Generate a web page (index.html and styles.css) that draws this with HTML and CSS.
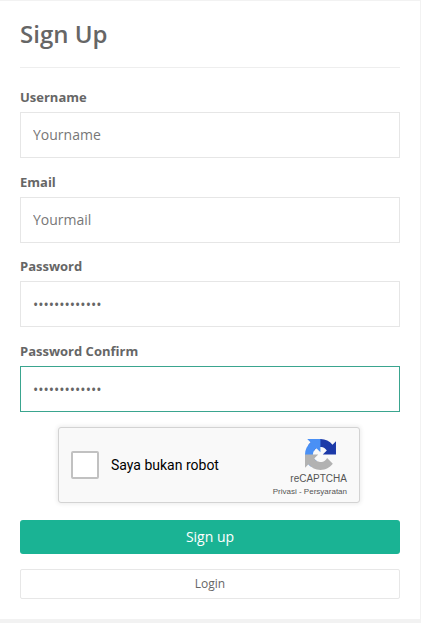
FILE: index.html
```html
<!DOCTYPE html>
<html lang="id">
<head>
  <meta charset="UTF-8" />
  <meta name="viewport" content="width=device-width, initial-scale=1.0" />
  <title>Sign Up</title>
  <link rel="stylesheet" href="styles.css">
</head>
<body>
  <!-- signup card -->
  <div class="card">
    <h1 class="card-title">Sign Up</h1>

    <form class="signup-form">
      <div class="form-group">
        <label for="username">Username</label>
        <input id="username" type="text" placeholder="Yourname">
      </div>
      <div class="form-group">
        <label for="email">Email</label>
        <input id="email" type="text" placeholder="Yourmail">
      </div>
      <div class="form-group">
        <label for="password">Password</label>
        <input id="password" class="is-secret" type="password" value="secretpasswor">
      </div>
      <div class="form-group">
        <label for="confirm">Password Confirm</label>
        <input id="confirm" class="is-secret is-focus" type="password" value="secretpasswor">
      </div>

      <!-- captcha box -->
      <div class="captcha">
        <span class="captcha-check"></span>
        <span class="captcha-text">Saya bukan robot</span>
        <div class="captcha-brand">
          <svg class="captcha-logo" viewBox="0 0 64 64" width="31" height="31">
            <path fill="#1c3aa9" d="M64 31.955l-.033-1.37V4.687l-7.16 7.16C50.948 4.674 42.033.093 32.05.093c-10.4 0-19.622 4.96-25.458 12.64l11.736 11.86a15.55 15.55 0 0 1 4.754-5.334c2.05-1.6 4.952-2.906 8.968-2.906.485 0 .86.057 1.135.163 4.976.393 9.288 3.14 11.827 7.124l-8.307 8.307L64 31.953"/>
            <path fill="#4a90f5" d="M31.862 0l-1.37.033H4.594l7.16 7.16C4.58 13.052 0 21.967 0 31.95c0 10.4 4.96 19.622 12.64 25.458l11.86-11.736a15.55 15.55 0 0 1-5.334-4.754c-1.6-2.05-2.906-4.952-2.906-8.968 0-.485.057-.86.163-1.135.393-4.976 3.14-9.288 7.124-11.827l8.307 8.307L31.86 0"/>
            <path fill="#b2b2b2" d="M.001 31.955l.033 1.37v25.9l7.16-7.16c5.86 7.173 14.774 11.754 24.76 11.754 10.4 0 19.622-4.96 25.458-12.64l-11.736-11.86a15.55 15.55 0 0 1-4.754 5.334c-2.05 1.6-4.952 2.906-8.968 2.906-.485 0-.86-.057-1.135-.163-4.976-.393-9.288-3.14-11.827-7.124l8.307-8.307L.001 31.953"/>
          </svg>
          <div class="captcha-name">reCAPTCHA</div>
          <div class="captcha-links">Privasi - Persyaratan</div>
        </div>
      </div>

      <button class="btn-signup" type="button">Sign up</button>
      <button class="btn-login" type="button">Login</button>
    </form>
  </div>
</body>
</html>
```

FILE: styles.css
```css
* {
  box-sizing: border-box;
}

html, body {
  margin: 0;
  padding: 0;
  height: 100%;
  overflow: hidden;
  background-color: #f2f2f2;
  font-family: "Open Sans", sans-serif;
  color: #666;
}

body {
  padding: 1px 1px 0 0;
}

.card {
  background-color: #fff;
  height: 618px;
  padding: 0 20px;
}

.card-title {
  margin: 0;
  height: 67px;
  padding-top: 15px;
  border-bottom: 1px solid #eee;
  font-size: 24px;
  line-height: 36px;
  font-weight: 600;
  color: #666;
}

/* form rows */
.signup-form {
  padding-top: 20px;
}

.form-group {
  height: 84.67px;
}

.form-group label {
  display: block;
  height: 24px;
  font-size: 13px;
  line-height: 19.4px;
  font-weight: 700;
  color: #666;
}

.form-group input {
  display: block;
  width: 100%;
  height: 46px;
  padding: 0 12px 1px;
  border: 1px solid #e6e6e6;
  border-radius: 0;
  outline: none;
  font-family: "Open Sans", sans-serif;
  font-size: 14px;
  color: #666;
}

.form-group input::placeholder {
  color: #777;
  opacity: 1;
}

.form-group input.is-secret {
  padding: 1px 12px 0;
}

.form-group input.is-focus {
  border-color: #3aa58f;
}

/* captcha */
.captcha {
  display: flex;
  align-items: center;
  width: 302px;
  height: 76px;
  margin: 0 0 17px 38px;
  padding: 0 12px;
  background-color: #f9f9f9;
  border: 1px solid #d3d3d3;
  border-radius: 3px;
  box-shadow: 0 0 4px 1px rgba(0,0,0,0.08);
  font-family: Roboto, sans-serif;
}

.captcha-check {
  width: 28px;
  height: 28px;
  background-color: #fff;
  border: 2px solid #c1c1c1;
  border-radius: 2px;
}

.captcha-text {
  flex: 1;
  margin-left: 12px;
  font-size: 14px;
  color: #000;
}

.captcha-brand {
  display: flex;
  flex-direction: column;
  align-items: flex-end;
  margin-top: 8px;
  color: #555;
}

.captcha-logo {
  display: block;
  margin: 0 11px 2px 0;
}

.captcha-name {
  font-family: "Liberation Sans", sans-serif;
  font-size: 10px;
  line-height: 13px;
}

.captcha-links {
  font-family: "Liberation Sans", sans-serif;
  font-size: 8px;
  line-height: 13px;
  white-space: nowrap;
}

/* buttons */
.btn-signup,
.btn-login {
  display: block;
  width: 100%;
  font-family: "Open Sans", sans-serif;
  cursor: pointer;
}

.btn-signup {
  height: 34px;
  margin-bottom: 15px;
  background-color: #1ab394;
  border: none;
  border-radius: 3px;
  color: #fff;
  font-size: 14px;
}

.btn-login {
  height: 30px;
  background-color: #fff;
  border: 1px solid #e7e7e7;
  border-radius: 2px;
  color: #666;
  font-size: 12px;
}
```
